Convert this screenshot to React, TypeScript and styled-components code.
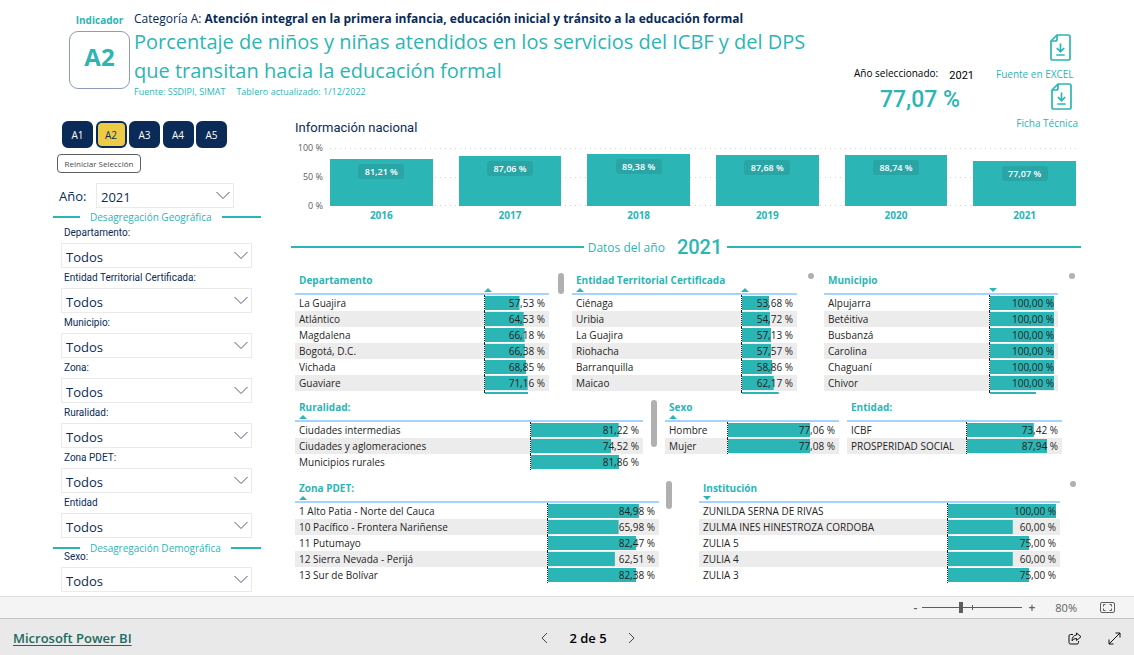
import React from "react";
import styled, { createGlobalStyle, css } from "styled-components";

const teal = "#2cb5b5";
const navy = "#0a2b57";
const sans = `"Open Sans", "Noto Sans", sans-serif`;
const din = `Roboto, "Liberation Sans", sans-serif`;

const GlobalStyle = createGlobalStyle`
  *, *::before, *::after { box-sizing: border-box; }
  body { margin: 0; background: #fff; color: #252423; font-family: ${sans}; font-size: 10px; }
  button, select, input { font: inherit; color: inherit; }
  h1, h2, p { margin: 0; font-weight: 400; }
`;

const Page = styled.div`
  display: flex;
  flex-direction: column;
  min-height: 100vh;
`;

const Report = styled.main`
  flex: 1;
`;

/* ---------- header ---------- */

const Header = styled.header`
  display: flex;
  height: 120px;
  padding: 10px 56px 0 69px;
`;

const Indicator = styled.div`
  display: flex;
  flex-direction: column;
  flex: none;
  width: 61px;
  margin-right: 4px;
  text-align: center;
  color: ${teal};
  font-weight: 700;
  font-size: 10px;
  line-height: 20px;
`;

const IndicatorCode = styled.div`
  height: 58px;
  margin-top: 1px;
  border: 1px solid #8e9cb8;
  border-radius: 9px;
  font-size: 24px;
  line-height: 50px;
`;

const Titles = styled.div`
  flex: 1;
  min-width: 0;
  color: ${teal};
`;

const Category = styled.p`
  color: ${navy};
  font-size: 12px;
  line-height: 17px;
`;

const Title = styled.h1`
  max-width: 700px;
  font-size: 20px;
  line-height: 29px;
`;

const Source = styled.p`
  display: flex;
  gap: 11px;
  padding-top: 1px;
  font-size: 9px;
  line-height: 12px;
`;

const Kpi = styled.div`
  flex: none;
  width: 120px;
  margin: 53px 22px 0 0;
`;

const KpiCaption = styled.div`
  display: flex;
  justify-content: space-between;
  align-items: flex-end;
  height: 20px;
  color: #000;
  line-height: 20px;
  white-space: nowrap;
`;

const KpiYear = styled.span`
  font-family: ${din};
  font-size: 11px;
  line-height: 14px;
`;

const KpiValue = styled.div`
  padding: 2px 14px 0 0;
  color: ${teal};
  font-family: ${din};
  font-size: 23px;
  font-weight: 500;
  line-height: 30px;
  text-align: right;
`;

const Downloads = styled.nav`
  display: flex;
  flex-direction: column;
  align-items: center;
  flex: none;
  width: 82px;
  padding-top: 24px;
`;

const Download = styled.a<{ $end?: boolean }>`
  display: flex;
  flex-direction: column;
  align-items: flex-end;
  align-self: ${(p) => (p.$end ? "flex-end" : "flex-start")};
  flex: none;
  height: 49px;
  color: ${teal};
  line-height: 14px;
  text-decoration: none;
  white-space: nowrap;

  svg { margin: 0 ${(p) => (p.$end ? 6 : 3)}px 6px 0; flex: none; }
`;

/* ---------- filters ---------- */

const Columns = styled.div`
  display: flex;
  gap: 30px;
  padding: 0 48px 0 53px;
`;

const Sidebar = styled.aside`
  flex: none;
  width: 208px;
  color: ${navy};
`;

const Tabs = styled.div`
  display: flex;
  justify-content: space-between;
  width: 165px;
  margin: 1px 0 6px 9px;
`;

const Tab = styled.button<{ $active?: boolean }>`
  width: 31px;
  height: 27px;
  padding: 0;
  border: 2px solid ${navy};
  border-radius: 6px;
  background: ${(p) => (p.$active ? "#edcb47" : navy)};
  color: ${(p) => (p.$active ? navy : "#fff")};
`;

const Reset = styled.button`
  display: block;
  width: 84px;
  height: 19px;
  margin-left: 4px;
  padding: 0;
  border: 1px solid #605e5c;
  border-radius: 4px;
  background: #fff;
  color: #4a4a4a;
  font-size: 8px;
  white-space: nowrap;
`;

const YearField = styled.div`
  display: flex;
  align-items: center;
  width: 181px;
  margin: 10px 0 3px;
  padding-left: 6px;
  font-size: 13px;

  label { width: 37px; flex: none; }
`;

const Section = styled.h2<{ $tight?: boolean }>`
  display: flex;
  align-items: center;
  gap: 10px;
  height: 12px;
  margin-bottom: ${(p) => (p.$tight ? "-3px" : "4px")};
  color: ${teal};
  font-size: 10px;
  line-height: 12px;
  white-space: nowrap;

  &::before, &::after { content: ""; height: 2px; background: ${teal}; }
  &::before { width: 27px; }
  &::after { flex: 1; }
`;

const Field = styled.div`
  margin: 0 9px 4px 8px;

  > label {
    display: block;
    margin-bottom: 5px;
    padding-left: 3px;
    font-family: ${din};
    font-size: 10px;
    line-height: 11px;
  }
`;

const SelectBox = styled.div`
  position: relative;
  flex: 1;

  svg {
    position: absolute;
    top: 8px;
    right: 4px;
    pointer-events: none;
  }
`;

const Select = styled.select`
  display: block;
  width: 100%;
  height: 25px;
  padding: 2px 24px 0 4px;
  border: 1px solid #eaeaea;
  border-radius: 0;
  background: #fff;
  appearance: none;
  font-size: 13px;
`;

/* ---------- national chart ---------- */

const Content = styled.div`
  flex: 1;
  min-width: 0;
`;

const ChartTitle = styled.h2`
  padding-left: 4px;
  color: ${navy};
  font-family: ${din};
  font-size: 13px;
  line-height: 16px;
`;

const Chart = styled.div`
  display: grid;
  grid-template-columns: 32px 1fr;
  column-gap: 7px;
  margin: 12px 10px 0 0;
`;

const Axis = styled.div`
  display: flex;
  flex-direction: column;
  justify-content: space-between;
  margin: -7px 0;
  color: #605e5c;
  font-size: 9px;
  line-height: 14px;
  text-align: right;
  white-space: nowrap;
`;

const dots = "linear-gradient(to right, #d2d2d2 1px, transparent 1px)";

const Plot = styled.div`
  display: grid;
  grid-template-columns: repeat(6, 1fr);
  column-gap: 26px;
  align-items: end;
  height: 58px;
  background: ${dots} 0 0 / 5px 1px repeat-x, ${dots} 0 50% / 5px 1px repeat-x, ${dots} 0 100% / 5px 1px repeat-x;
`;

const Bar = styled.div`
  display: flex;
  justify-content: center;
  align-items: flex-start;
  padding-top: 5px;
  background: ${teal};
`;

const BarValue = styled.span`
  width: 46px;
  border-radius: 3px;
  background: #2aa5a6;
  color: #fff;
  font-size: 9px;
  font-weight: 600;
  line-height: 15px;
  text-align: center;
  white-space: nowrap;
`;

const Years = styled.div`
  display: grid;
  grid-column: 2;
  grid-template-columns: repeat(6, 1fr);
  column-gap: 26px;
  margin-top: 1px;
  color: ${teal};
  font-weight: 700;
  line-height: 16px;
  text-align: center;
`;

const YearDivider = styled.h2`
  display: grid;
  grid-template-columns: 293fr auto auto 354fr;
  align-items: center;
  height: 24px;
  margin: 12px 5px 13px 0;
  color: ${teal};
  font-size: 12px;
  white-space: nowrap;

  &::before, &::after { content: ""; height: 2px; background: ${teal}; }
`;

const DividerText = styled.span`
  padding: 0 12px 0 4px;
`;

const DividerYear = styled.span`
  padding-right: 5px;
  font-family: ${din};
  font-size: 20px;
  font-weight: 500;
`;

/* ---------- tables ---------- */

const TableRow = styled.div<{ $gap?: number; $space: number }>`
  display: flex;
  gap: ${(p) => p.$gap ?? 0}px;
  margin-bottom: ${(p) => p.$space}px;
  padding-left: 4px;
`;

const Panel = styled.section<{ $grow: number }>`
  display: flex;
  flex: ${(p) => p.$grow} 1 0;
  min-width: 0;
`;

const Clip = styled.div<{ $rows: number; $peek: number }>`
  flex: 1;
  min-width: 0;
  height: ${(p) => 23 + p.$rows * 16 + p.$peek}px;
  overflow: hidden;
`;

const Gutter = styled.div<{ $width: number }>`
  display: flex;
  justify-content: center;
  align-items: flex-start;
  flex: none;
  width: ${(p) => p.$width}px;
`;

const Thumb = styled.span<{ $length: number }>`
  width: 6px;
  height: ${(p) => p.$length}px;
  margin-top: 1px;
  border-radius: 3px;
  background: #b0b0b0;
`;

const Table = styled.table`
  width: 100%;
  table-layout: fixed;
  border-collapse: separate;
  border-spacing: 0;

  th {
    height: 23px;
    padding: 0;
    border-bottom: 2px solid #a6d3fb;
    color: ${teal};
    font-weight: 700;
    line-height: 16px;
    text-align: left;
    vertical-align: top;
    white-space: nowrap;
  }
  th:first-child { padding-left: 4px; }
  td { height: 16px; padding: 0 4px; line-height: 16px; white-space: nowrap; }
  tbody tr:nth-child(even) { background: #ececec; }
`;

const Heading = styled.span`
  display: block;
  height: 16px;
`;

const ValueHead = styled.th<{ $width: number }>`
  width: ${(p) => p.$width}px;
`;

const ValueCell = styled.td`
  border-left: 1px dotted #222;
  background-image: linear-gradient(${teal}, ${teal});
  background-repeat: no-repeat;
  background-position: 0 50%;
  text-align: right;
`;

const Mark = styled.span<{ $down?: boolean }>`
  display: block;
  width: 0;
  height: 0;
  border: 4px solid transparent;
  ${(p) =>
    p.$down
      ? css`border-top-color: ${teal}; border-bottom: 0;`
      : css`border-bottom-color: ${teal}; border-top: 0;`}
`;

/* ---------- bottom bars ---------- */

const ZoomBar = styled.div`
  display: flex;
  align-items: center;
  justify-content: flex-end;
  height: 22px;
  padding-right: 19px;
  border-top: 1px solid #dcdcdc;
  background: #f4f4f4;
  color: #605e5c;
  font-size: 12px;
`;

const IconButton = styled.button`
  display: flex;
  align-items: center;
  justify-content: center;
  padding: 0;
  border: 0;
  background: none;
  font-weight: 600;
  line-height: 16px;
`;

const Range = styled.input`
  width: 100px;
  height: 12px;
  margin: 0 6px 0 5px;
  appearance: none;
  background: linear-gradient(#605e5c, #605e5c) 50% 50% / 1px 5px no-repeat,
    linear-gradient(#605e5c, #605e5c) 0 50% / 100% 1px no-repeat;

  &::-webkit-slider-thumb {
    appearance: none;
    width: 4px;
    height: 11px;
    background: #605e5c;
  }
`;

const ZoomValue = styled.span`
  margin: 0 23px 0 20px;
  font-size: 11px;
`;

const BottomBar = styled.footer`
  display: grid;
  grid-template-columns: 1fr auto 1fr;
  align-items: center;
  height: 37px;
  padding: 2px 13px 0;
  border-top: 1px solid #c4c4c4;
  background: #e9e9e9;
`;

const BrandLink = styled.a`
  color: #1d6a5f;
  font-size: 13px;
  font-weight: 600;
  text-underline-offset: 2px;
`;

const Pager = styled.nav`
  display: flex;
  align-items: center;
  gap: 21px;
  padding-left: 42px;
  color: #000;
  font-size: 13px;
  font-weight: 600;
`;

const Actions = styled.div`
  display: flex;
  justify-content: flex-end;
  gap: 26px;
`;

const Chevron = () => (
  <svg width="14" height="9" viewBox="0 0 14 9" fill="none" stroke="#4f5b7c" strokeWidth="1">
    <path d="M0.5 1L7 7.5L13.5 1" />
  </svg>
);

const FileIcon = () => (
  <svg width="21" height="27" viewBox="0 0 21 27" fill="none" stroke={teal} strokeWidth="1.7">
    <path d="M7 1H18.2Q20 1 20 2.8V24.2Q20 26 18.2 26H2.8Q1 26 1 24.2V7Z" strokeLinejoin="round" />
    <path d="M7 1V5.2Q7 7 5.2 7H1" />
    <path d="M10.5 9.5V17.5M6.8 14L10.5 17.7L14.2 14M6.3 21H14.7" />
  </svg>
);

type Sort = "up" | "down" | undefined;
type Row = [string, number | null];

interface DataProps {
  title: string;
  grow: number;
  gutter: number;
  thumb?: number;
  valueWidth: number;
  rows: Row[];
  peek?: number;
  visible?: number;
  nameSort?: Sort;
  valueSort?: Sort;
}

const percent = (n: number) => n.toFixed(2).replace(".", ",") + " %";

function DataTable(p: DataProps) {
  const visible = p.visible ?? p.rows.length;
  return (
    <Panel $grow={p.grow}>
      <Clip $rows={visible} $peek={p.peek ?? 0}>
        <Table>
          <thead>
            <tr>
              <th scope="col">
                <Heading>{p.title}</Heading>
                {p.nameSort && <Mark $down={p.nameSort === "down"} />}
              </th>
              <ValueHead $width={p.valueWidth} scope="col" aria-label="Porcentaje">
                <Heading />
                {p.valueSort && <Mark $down={p.valueSort === "down"} />}
              </ValueHead>
            </tr>
          </thead>
          <tbody>
            {p.rows.map(([name, value], i) => (
              <tr key={i}>
                <td>{name}</td>
                <ValueCell style={{ backgroundSize: `calc((100% - 4px) * ${(value ?? 72) / 100}) 14px` }}>
                  {value !== null && percent(value)}
                </ValueCell>
              </tr>
            ))}
          </tbody>
        </Table>
      </Clip>
      <Gutter $width={p.gutter}>{p.thumb && <Thumb $length={p.thumb} />}</Gutter>
    </Panel>
  );
}

function Filter({ id, label }: { id: string; label: string }) {
  return (
    <Field>
      <label htmlFor={id}>{label}</label>
      <SelectBox>
        <Select id={id}>
          <option>Todos</option>
        </Select>
        <Chevron />
      </SelectBox>
    </Field>
  );
}

const national: [string, number][] = [
  ["2016", 81.21],
  ["2017", 87.06],
  ["2018", 89.38],
  ["2019", 87.68],
  ["2020", 88.74],
  ["2021", 77.07],
];

export default function App() {
  return (
    <Page>
      <GlobalStyle />
      <Report>
        <Header>
          <Indicator>
            Indicador
            <IndicatorCode>A2</IndicatorCode>
          </Indicator>
          <Titles>
            <Category>
              Categoría A: <b>Atención integral en la primera infancia, educación inicial y tránsito a la educación formal</b>
            </Category>
            <Title>Porcentaje de niños y niñas atendidos en los servicios del ICBF y del DPS que transitan hacia la educación formal</Title>
            <Source>
              <span>Fuente: SSDIPI, SIMAT</span>
              <span>Tablero actualizado: 1/12/2022</span>
            </Source>
          </Titles>
          <Kpi>
            <KpiCaption>
              Año seleccionado: <KpiYear>2021</KpiYear>
            </KpiCaption>
            <KpiValue>77,07 %</KpiValue>
          </Kpi>
          <Downloads>
            <Download href="#excel">
              <FileIcon />
              Fuente en EXCEL
            </Download>
            <Download href="#ficha" $end>
              <FileIcon />
              Ficha Técnica
            </Download>
          </Downloads>
        </Header>

        <Columns>
          <Sidebar>
            <Tabs>
              {["A1", "A2", "A3", "A4", "A5"].map((t) => (
                <Tab key={t} $active={t === "A2"}>{t}</Tab>
              ))}
            </Tabs>
            <Reset>Reiniciar Selección</Reset>
            <YearField>
              <label htmlFor="year">Año:</label>
              <SelectBox>
                <Select id="year">
                  <option>2021</option>
                </Select>
                <Chevron />
              </SelectBox>
            </YearField>
            <Section>Desagregación Geográfica</Section>
            <Filter id="dep" label="Departamento:" />
            <Filter id="etc" label="Entidad Territorial Certificada:" />
            <Filter id="mun" label="Municipio:" />
            <Filter id="zona" label="Zona:" />
            <Filter id="rur" label="Ruralidad:" />
            <Filter id="pdet" label="Zona PDET:" />
            <Filter id="ent" label="Entidad" />
            <Section $tight>Desagregación Demográfica</Section>
            <Filter id="sexo" label="Sexo:" />
          </Sidebar>

          <Content>
            <ChartTitle>Información nacional</ChartTitle>
            <Chart>
              <Axis>
                <span>100 %</span>
                <span>50 %</span>
                <span>0 %</span>
              </Axis>
              <Plot>
                {national.map(([year, value]) => (
                  <Bar key={year} style={{ height: `${value}%` }}>
                    <BarValue>{percent(value)}</BarValue>
                  </Bar>
                ))}
              </Plot>
              <Years>
                {national.map(([year]) => (
                  <span key={year}>{year}</span>
                ))}
              </Years>
            </Chart>

            <YearDivider>
              <DividerText>Datos del año</DividerText>
              <DividerYear>2021</DividerYear>
            </YearDivider>

            <TableRow $space={5}>
              <DataTable
                title="Departamento" grow={277} gutter={23} thumb={21} valueWidth={65} valueSort="up" visible={6} peek={3}
                rows={[["La Guajira", 57.53], ["Atlántico", 64.53], ["Magdalena", 66.18], ["Bogotá, D.C.", 66.38], ["Vichada", 68.85], ["Guaviare", 71.16], ["", null]]}
              />
              <DataTable
                title="Entidad Territorial Certificada" grow={252} gutter={27} thumb={6} valueWidth={56} nameSort="up" valueSort="up" visible={6} peek={3}
                rows={[["Ciénaga", 53.68], ["Uribia", 54.72], ["La Guajira", 57.13], ["Riohacha", 57.57], ["Barranquilla", 58.86], ["Maicao", 62.17], ["", null]]}
              />
              <DataTable
                title="Municipio" grow={262} gutter={28} thumb={6} valueWidth={69} valueSort="down" visible={6} peek={3}
                rows={[["Alpujarra", 100], ["Betéitiva", 100], ["Busbanzá", 100], ["Carolina", 100], ["Chaguaní", 100], ["Chivor", 100], ["", null]]}
              />
            </TableRow>
            <TableRow $space={10}>
              <DataTable
                title="Ruralidad:" grow={370} gutter={22} thumb={47} valueWidth={113} nameSort="up"
                rows={[["Ciudades intermedias", 81.22], ["Ciudades y aglomeraciones", 74.52], ["Municipios rurales", 81.86]]}
              />
              <DataTable
                title="Sexo" grow={182} gutter={8} valueWidth={112} nameSort="up"
                rows={[["Hombre", 77.06], ["Mujer", 77.08]]}
              />
              <DataTable
                title="Entidad:" grow={239} gutter={24} valueWidth={96}
                rows={[["ICBF", 73.42], ["PROSPERIDAD SOCIAL", 87.94]]}
              />
            </TableRow>
            <TableRow $gap={20} $space={0}>
              <DataTable
                title="Zona PDET:" grow={384} gutter={20} thumb={28} valueWidth={112} nameSort="up"
                rows={[["1 Alto Patia - Norte del Cauca", 84.98], ["10 Pacífico - Frontera Nariñense", 65.98], ["11 Putumayo", 82.47], ["12 Sierra Nevada - Perijá", 62.51], ["13 Sur de Bolívar", 82.38]]}
              />
              <DataTable
                title="Institución" grow={387} gutter={26} thumb={6} valueWidth={113} nameSort="down"
                rows={[["ZUNILDA SERNA DE RIVAS", 100], ["ZULMA INES HINESTROZA CORDOBA", 60], ["ZULIA 5", 75], ["ZULIA 4", 60], ["ZULIA 3", 75]]}
              />
            </TableRow>
          </Content>
        </Columns>
      </Report>

      <ZoomBar>
        <IconButton aria-label="Alejar">-</IconButton>
        <Range type="range" min={0} max={100} defaultValue={38} aria-label="Zoom" />
        <IconButton aria-label="Acercar">+</IconButton>
        <ZoomValue>80%</ZoomValue>
        <IconButton aria-label="Ajustar a la página">
          <svg width="15" height="11" viewBox="0 0 15 11" fill="none" stroke="#605e5c">
            <rect x="0.5" y="0.5" width="14" height="10" rx="1.5" />
            <path d="M3.5 4.5V2.5H5.5M9.5 2.5H11.5V4.5M11.5 6.5V8.5H9.5M5.5 8.5H3.5V6.5" />
          </svg>
        </IconButton>
      </ZoomBar>
      <BottomBar>
        <div>
          <BrandLink href="#powerbi">Microsoft Power BI</BrandLink>
        </div>
        <Pager>
          <IconButton aria-label="Página anterior">
            <svg width="7" height="12" viewBox="0 0 7 12" fill="none" stroke="#444">
              <path d="M6 1L1 6L6 11" />
            </svg>
          </IconButton>
          2 de 5
          <IconButton aria-label="Página siguiente">
            <svg width="7" height="12" viewBox="0 0 7 12" fill="none" stroke="#444">
              <path d="M1 1L6 6L1 11" />
            </svg>
          </IconButton>
        </Pager>
        <Actions>
          <IconButton aria-label="Compartir">
            <svg width="14" height="13" viewBox="0 0 14 13" fill="none" stroke="#111" strokeLinejoin="round">
              <path d="M5 2.5H2.5Q1 2.5 1 4V10.5Q1 12 2.5 12H9Q10.5 12 10.5 10.5V9" />
              <path d="M8.5 1L13 4.7L8.5 8.5V6.5Q5.5 6.3 4 8.8Q4.2 3.5 8.5 3Z" />
            </svg>
          </IconButton>
          <IconButton aria-label="Pantalla completa">
            <svg width="13" height="13" viewBox="0 0 13 13" fill="none" stroke="#111">
              <path d="M1 12L12 1M7.5 1H12V5.5M1 7.5V12H5.5" />
            </svg>
          </IconButton>
        </Actions>
      </BottomBar>
    </Page>
  );
}
